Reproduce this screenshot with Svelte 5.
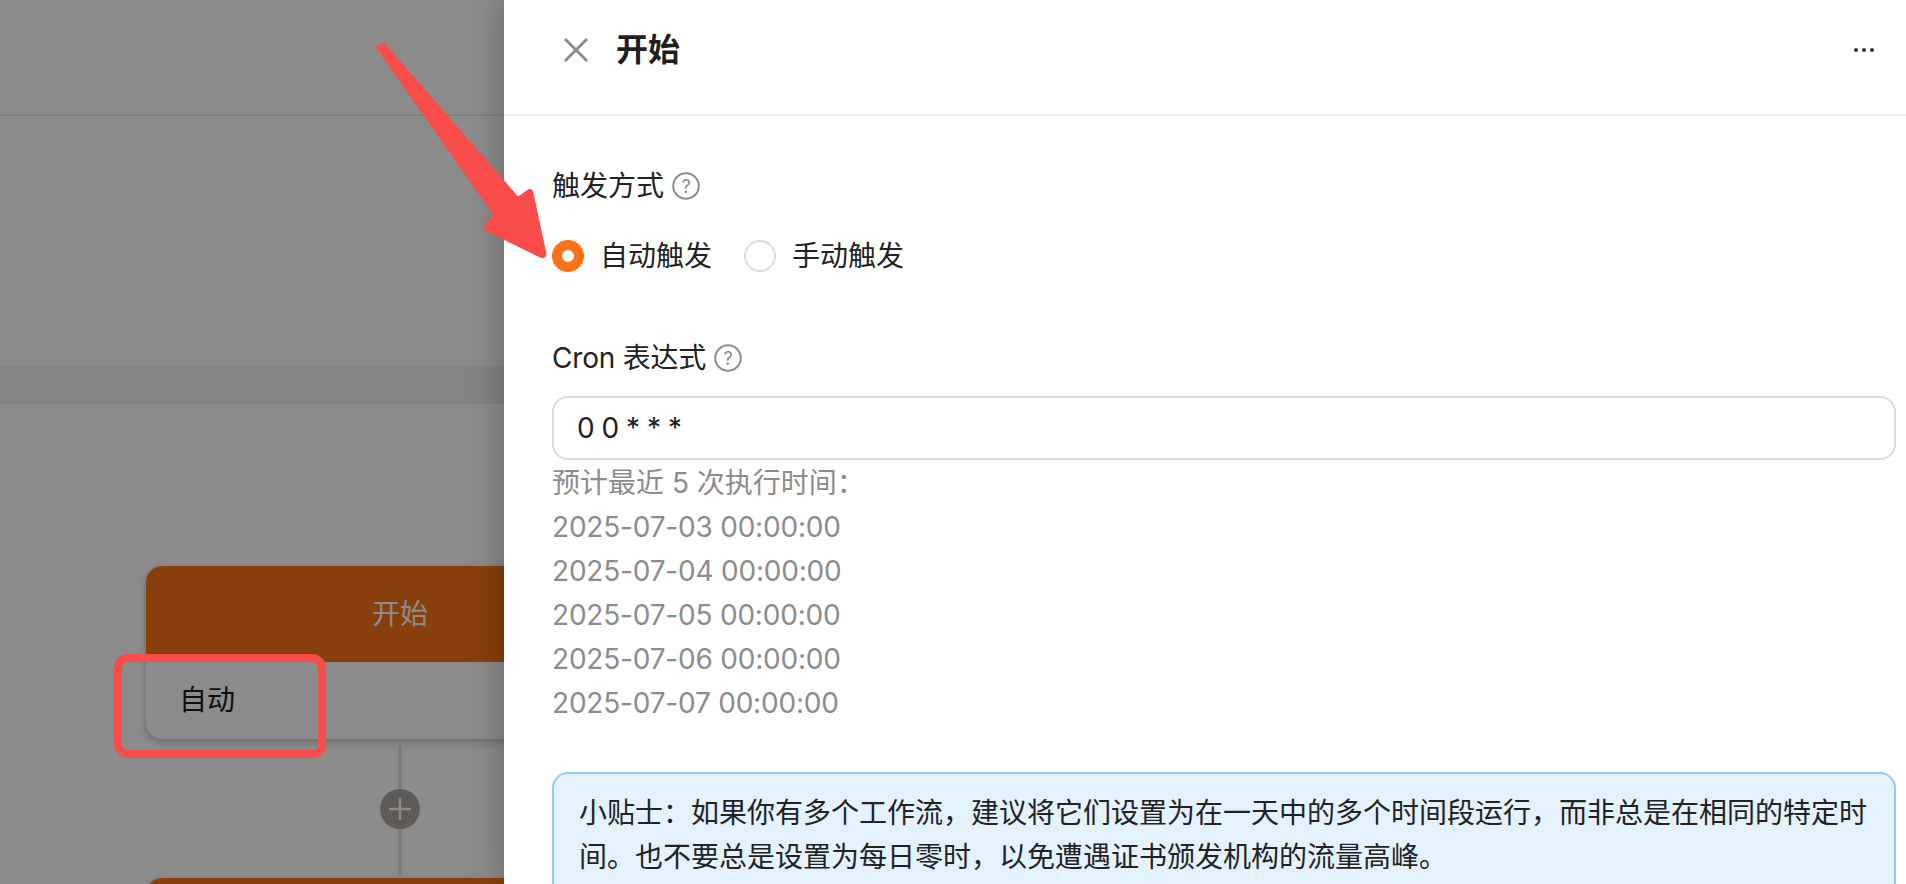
<script>
  const dates = [
    "2025-07-03 00:00:00",
    "2025-07-04 00:00:00",
    "2025-07-05 00:00:00",
    "2025-07-06 00:00:00",
    "2025-07-07 00:00:00"
  ]
  const hintTitle = "预计最近 5 次执行时间\uFF1A"
  const tip = "小贴士\uFF1A如果你有多个工作流\uFF0C建议将它们设置为在一天中的多个时间段运行\uFF0C而非总是在相同的特定时间\u3002也不要总是设置为每日零时\uFF0C以免遭遇证书颁发机构的流量高峰\u3002"
</script>

<div class="page">
  <section class="canvas">
    <div class="toolbar"></div>
    <div class="tabs"></div>
    <div class="flow">
      <div class="node">
        <div class="node-head">开始</div>
        <div class="node-body">自动</div>
      </div>
      <div class="link">
        <span class="add">
          <svg width="24" height="24" viewBox="0 0 24 24" fill="none" stroke="#fff" stroke-width="2.4">
            <path d="M12 1v22M1 12h22" />
          </svg>
        </span>
      </div>
      <div class="node next"></div>
    </div>
    <div class="scrim"></div>
  </section>

  <aside class="drawer">
    <header class="head">
      <svg class="close" width="24" height="24" viewBox="0 0 24 24" fill="none" stroke="#8a8a8a" stroke-width="2.8">
        <path d="M1 1l22 22M23 1L1 23" />
      </svg>
      <h2>开始</h2>
      <svg class="more" width="22" height="6" viewBox="0 0 22 6" fill="#333">
        <circle cx="3" cy="3" r="2" />
        <circle cx="11" cy="3" r="2" />
        <circle cx="19" cy="3" r="2" />
      </svg>
    </header>

    <div class="body">
      <div class="label">
        触发方式
        <svg class="help" width="28" height="28" viewBox="0 0 28 28" fill="none">
          <circle cx="14" cy="14" r="12.8" stroke="#8c8c8c" stroke-width="2" />
          <text x="14" y="20.5" text-anchor="middle">?</text>
        </svg>
      </div>
      <div class="radios">
        <span class="radio on"></span>
        <span class="radio-text">自动触发</span>
        <span class="radio"></span>
        <span class="radio-text">手动触发</span>
      </div>

      <div class="label cron">
        Cron 表达式
        <svg class="help" width="28" height="28" viewBox="0 0 28 28" fill="none">
          <circle cx="14" cy="14" r="12.8" stroke="#8c8c8c" stroke-width="2" />
          <text x="14" y="20.5" text-anchor="middle">?</text>
        </svg>
      </div>
      <input class="input" value="0 0 * * *" />
      <div class="hint">
        <div>{hintTitle}</div>
        {#each dates as d}
          <div class="date">{d}</div>
        {/each}
      </div>

      <div class="tip">{tip}</div>
    </div>
  </aside>

  <!-- annotations drawn over the screenshot -->
  <svg class="marks" width="1906" height="884" viewBox="0 0 1906 884">
    <rect x="118" y="658" width="204" height="96" rx="10" fill="none" stroke="#f94d4b" stroke-width="8" />
    <path d="M376 47L384 43L518 197L528 190Q532 188 533 193L546 254Q546 259 540 257L487 231Q482 228 485 225L494 215Z" fill="#f94d4b" stroke="#f94d4b" stroke-width="1" stroke-linejoin="round" />
  </svg>
</div>

<style>
  :global(body) {
    margin: 0;
    background: #fff;
  }

  .page {
    position: relative;
    display: flex;
    height: 884px;
    overflow: hidden;
    font-family: Inter, "Noto Sans CJK SC", sans-serif;
    font-size: 28px;
    line-height: 44px;
    color: #222;
  }

  .canvas {
    position: relative;
    width: 504px;
    flex-shrink: 0;
    overflow: hidden;
    background: #fff;
  }

  .toolbar {
    height: 114px;
    border-bottom: 2px solid #ebebeb;
  }

  .tabs {
    height: 38px;
    margin-top: 250px;
    background: #f1f1f1;
  }

  .flow {
    width: 508px;
    margin: 162px 0 0 146px;
  }

  .node {
    border-radius: 16px;
    overflow: hidden;
    background: #fff;
    box-shadow: 0 3px 8px rgba(0, 0, 0, 0.25);
  }

  .node-head {
    height: 96px;
    line-height: 96px;
    text-align: center;
    background: #f97316;
    color: #fff;
  }

  .node-body {
    height: 77px;
    line-height: 76px;
    padding-left: 33px;
    color: #1a1a1a;
  }

  .link {
    display: flex;
    align-items: center;
    justify-content: center;
    height: 133px;
    margin-top: 3px;
    background: linear-gradient(#e4e4e4, #e4e4e4) center / 4px 100% no-repeat;
  }

  .add {
    display: flex;
    align-items: center;
    justify-content: center;
    width: 40px;
    height: 40px;
    border-radius: 50%;
    background: #aca5a0;
  }

  .node.next {
    height: 100px;
    margin-top: 3px;
    background: #f97316;
  }

  .scrim {
    position: absolute;
    inset: 0;
    background: rgba(0, 0, 0, 0.45);
  }

  .drawer {
    position: relative;
    flex: 1;
    min-width: 0;
    background: #fff;
    box-shadow: 0 0 34px rgba(0, 0, 0, 0.3);
  }

  .head {
    display: flex;
    align-items: center;
    height: 100px;
    padding: 0 31px 14px 60px;
    border-bottom: 2px solid #f0f0f0;
  }

  .head h2 {
    margin: 0 0 0 28px;
    font-size: 32px;
    font-weight: 600;
    color: #1f1f1f;
  }

  .more {
    margin-left: auto;
  }

  .body {
    padding: 48px 10px 0 48px;
  }

  .label {
    display: flex;
    align-items: center;
    gap: 8px;
  }

  .help text {
    font-size: 18px;
    fill: #8c8c8c;
  }

  .radios {
    display: flex;
    align-items: center;
    height: 44px;
    margin-top: 26px;
  }

  .radio {
    box-sizing: border-box;
    width: 32px;
    height: 32px;
    border: 2px solid #dcdcdc;
    border-radius: 50%;
    background: #fff;
  }

  .radio.on {
    border: 10px solid #f97316;
  }

  .radio-text {
    margin: 0 32px 0 16px;
  }

  .cron {
    margin-top: 58px;
    letter-spacing: -0.2px;
  }

  .input {
    display: block;
    box-sizing: border-box;
    width: 100%;
    height: 64px;
    margin-top: 16px;
    padding: 0 23px;
    border: 2px solid #dcdcdc;
    border-radius: 16px;
    font: inherit;
    letter-spacing: -0.5px;
    color: #222;
    outline: none;
  }

  .hint {
    padding-top: 1px;
    color: #8c8c8c;
  }

  .date {
    letter-spacing: -0.2px;
  }

  .tip {
    margin-top: 47px;
    padding: 17px 24px 40px 25px;
    border: 2px solid #90caf9;
    border-radius: 16px;
    background: #e3f2fd;
  }

  .marks {
    position: absolute;
    top: 0;
    left: 0;
    pointer-events: none;
  }
</style>
